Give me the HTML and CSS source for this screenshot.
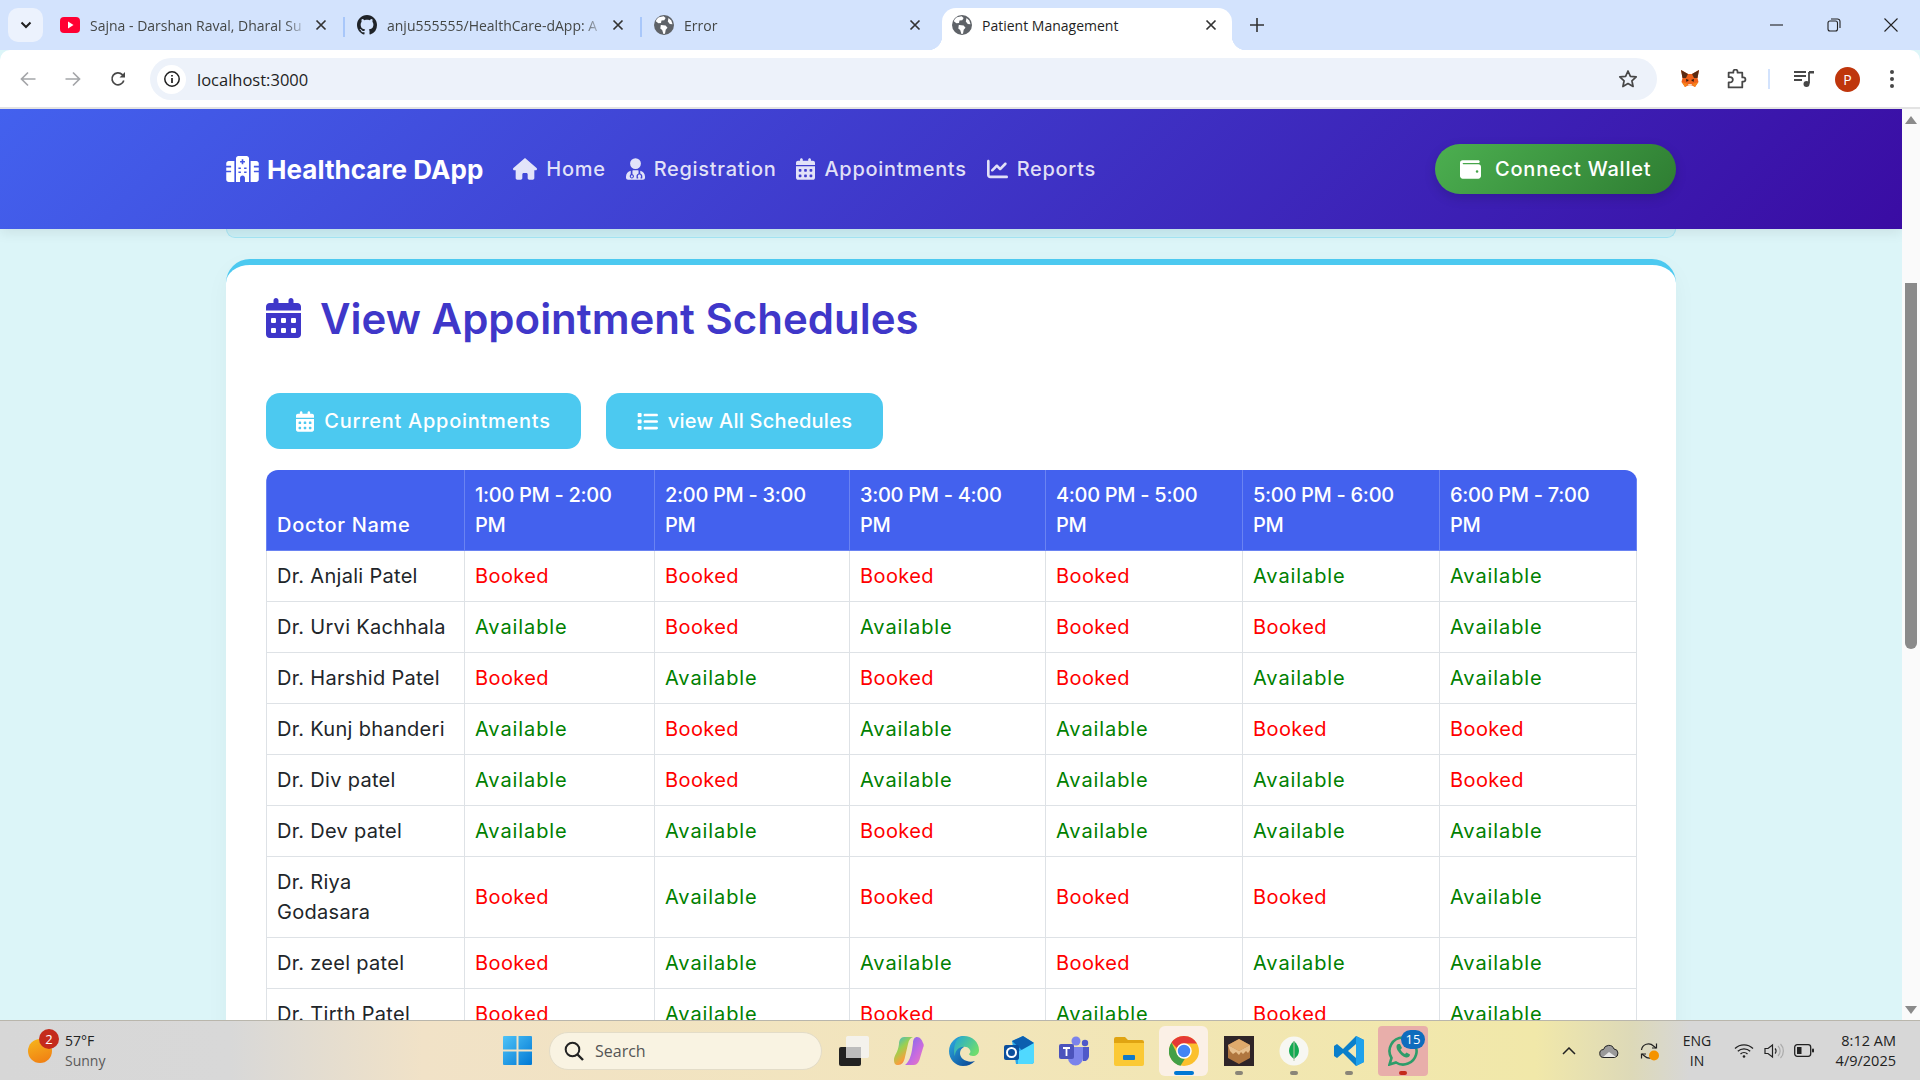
FILE: index.html
```html
<!DOCTYPE html>
<html>
<head>
    <meta charset="utf-8">
    <title>Patient Management</title>
    <link rel="stylesheet" href="styles.css">
</head>
<body>

<svg class="defs" width="0" height="0">
    <symbol id="i-calendar" viewBox="0 0 448 512"><path d="M128 0c17.7 0 32 14.3 32 32V64H288V32c0-17.7 14.3-32 32-32s32 14.3 32 32V64h48c26.5 0 48 21.5 48 48v48H0V112C0 85.5 21.5 64 48 64H96V32c0-17.7 14.3-32 32-32zM0 192H448V464c0 26.5-21.5 48-48 48H48c-26.5 0-48-21.5-48-48V192zm64 80v32c0 8.8 7.2 16 16 16h32c8.8 0 16-7.2 16-16V272c0-8.8-7.2-16-16-16H80c-8.8 0-16 7.2-16 16zm128 0v32c0 8.8 7.2 16 16 16h32c8.8 0 16-7.2 16-16V272c0-8.8-7.2-16-16-16H208c-8.8 0-16 7.2-16 16zm144-16c-8.8 0-16 7.2-16 16v32c0 8.8 7.2 16 16 16h32c8.8 0 16-7.2 16-16V272c0-8.8-7.2-16-16-16H336zM64 400v32c0 8.8 7.2 16 16 16h32c8.8 0 16-7.2 16-16V400c0-8.8-7.2-16-16-16H80c-8.8 0-16 7.2-16 16zm144-16c-8.8 0-16 7.2-16 16v32c0 8.8 7.2 16 16 16h32c8.8 0 16-7.2 16-16V400c0-8.8-7.2-16-16-16H208zm112 16v32c0 8.8 7.2 16 16 16h32c8.8 0 16-7.2 16-16V400c0-8.8-7.2-16-16-16H336c-8.8 0-16 7.2-16 16z"/></symbol>
    <symbol id="i-house" viewBox="0 0 576 512"><path d="M575.8 255.5c0 18-15 32.1-32 32.1h-32l.7 160.2c0 2.7-.2 5.4-.5 8.1V472c0 22.1-17.9 40-40 40H456c-1.1 0-2.2 0-3.3-.1c-1.4 .1-2.8 .1-4.2 .1H416 392c-22.1 0-40-17.9-40-40V448 384c0-17.7-14.3-32-32-32H256c-17.7 0-32 14.3-32 32v64 24c0 22.1-17.9 40-40 40H160 128.1c-1.5 0-3-.1-4.5-.2c-1.2 .1-2.4 .2-3.6 .2H104c-22.1 0-40-17.9-40-40V360c0-.9 0-1.9 .1-2.8V287.6H32c-18 0-32-14-32-32.1c0-9 3-17 10-24L266.4 8c7-7 15-8 22-8s15 2 21 7L564.8 231.5c8 7 12 15 11 24z"/></symbol>
    <symbol id="i-chart" viewBox="0 0 512 512"><path d="M64 64c0-17.7-14.3-32-32-32S0 46.3 0 64V400c0 44.2 35.8 80 80 80H480c17.7 0 32-14.3 32-32s-14.3-32-32-32H80c-8.8 0-16-7.2-16-16V64zm406.6 86.6c12.5-12.5 12.5-32.8 0-45.3s-32.8-12.5-45.3 0L320 210.7l-57.4-57.4c-12.5-12.5-32.8-12.5-45.3 0l-112 112c-12.5 12.5-12.5 32.8 0 45.3s32.8 12.5 45.3 0L240 221.3l57.4 57.4c12.5 12.5 32.8 12.5 45.3 0l128-128z"/></symbol>
    <symbol id="i-list" viewBox="0 0 512 512"><path d="M40 48C26.7 48 16 58.7 16 72v48c0 13.3 10.7 24 24 24H88c13.3 0 24-10.7 24-24V72c0-13.3-10.7-24-24-24H40zM192 64c-17.7 0-32 14.3-32 32s14.3 32 32 32H480c17.7 0 32-14.3 32-32s-14.3-32-32-32H192zm0 160c-17.7 0-32 14.3-32 32s14.3 32 32 32H480c17.7 0 32-14.3 32-32s-14.3-32-32-32H192zm0 160c-17.7 0-32 14.3-32 32s14.3 32 32 32H480c17.7 0 32-14.3 32-32s-14.3-32-32-32H192zM16 232v48c0 13.3 10.7 24 24 24H88c13.3 0 24-10.7 24-24V232c0-13.3-10.7-24-24-24H40c-13.3 0-24 10.7-24 24zM40 368c-13.3 0-24 10.7-24 24v48c0 13.3 10.7 24 24 24H88c13.3 0 24-10.7 24-24V392c0-13.3-10.7-24-24-24H40z"/></symbol>
    <symbol id="i-wallet" viewBox="0 0 512 512"><path d="M64 32C28.7 32 0 60.7 0 96V416c0 35.3 28.7 64 64 64H448c35.3 0 64-28.7 64-64V192c0-35.3-28.7-64-64-64H80c-8.8 0-16-7.2-16-16s7.2-16 16-16H448c17.7 0 32-14.3 32-32s-14.3-32-32-32H64zM416 272a32 32 0 1 1 0 64 32 32 0 1 1 0-64z"/></symbol>
    <symbol id="i-hospital" viewBox="0 0 640 512"><path fill-rule="evenodd" d="M192 48c0-26.5 21.5-48 48-48H400c26.5 0 48 21.5 48 48V512H368V432c0-26.5-21.5-48-48-48s-48 21.5-48 48v80H192V48zM304 64v32H272v32h32v32h32V128h32V96H336V64H304zM240 224v32h48V224H240zm112 0v32h48V224H352zM240 304v32h48V304H240zm112 0v32h48V304H352zM160 96V512H48c-26.5 0-48-21.5-48-48V320h96V288H0V224h96V192H0V144c0-26.5 21.5-48 48-48H160zM480 96H592c26.5 0 48 21.5 48 48v48H544v32h96v64H544v32h96V464c0 26.5-21.5 48-48 48H480V96z"/></symbol>
    <symbol id="i-doctor" viewBox="0 0 448 512"><path fill-rule="evenodd" d="M224 0a128 128 0 1 1 0 256A128 128 0 1 1 224 0zM112 296c-64 14-112 70-112 138v30c0 26 22 48 48 48H400c26 0 48-22 48-48V434c0-68-48-124-112-138v64c30 8 48 34 48 62v44c0 9-7 16-16 16H344v-32h8V422c0-20-16-36-36-36s-36 16-36 36v28h8v32H264c-9 0-16-7-16-16V422c0-28 18-54 48-62V292c-12-2-24-4-36-4H188c-12 0-24 2-36 4v86c22 7 36 28 36 50 0 30-24 50-50 50s-50-20-50-50c0-22 14-43 24-50V296zM138 454a24 24 0 1 0 0-48 24 24 0 1 0 0 48z"/></symbol>
    <symbol id="i-globe" viewBox="0 0 20 20"><circle cx="10" cy="10" r="10" fill="#5f6368"/><path fill="#fff" d="M5 2.2 9.6 1.2l2 1.8-1.3 2.2-2.8.4-.5 2.4-2.600.2-2.600-2C2.400 4.600 3.500 3.100 5 2.200zM7.300 9.900l4.300.7 1.900 2.100-1.800 2.100-.7 3.900-1.600.2-1.200-3.800-1.900-1.700.5-3.500zM14.500 3l2.800 2.600 1.200 3.600-2.700-.2-2-2.500.7-3.500z"/></symbol>
    <symbol id="i-x" viewBox="0 0 12 12"><path d="M1.500 1.500l9 9M10.500 1.500l-9 9" stroke="currentColor" stroke-width="1.700" fill="none"/></symbol>
</svg>

<div class="tabstrip">
    <div class="tab-list-btn">
        <svg width="12" height="8" viewBox="0 0 12 8"><path d="M1.500 1.500L6 6l4.500-4.500" fill="none" stroke="#1f1f1f" stroke-width="2"/></svg>
    </div>
    <div class="tab">
        <svg class="favicon" viewBox="0 0 20 20"><rect x="0" y="2" width="20" height="16" rx="4" fill="#ff0033"/><path d="M8 6.500l5.500 3.500L8 13.500z" fill="#fff"/></svg>
        <span class="tab-title">Sajna - Darshan Raval, Dharal Su</span>
        <svg class="tab-close"><use href="#i-x"/></svg>
    </div>
    <div class="tab-sep"></div>
    <div class="tab">
        <svg class="favicon" viewBox="0 0 16 16" fill="#1f2328"><path d="M8 0C3.580 0 0 3.580 0 8c0 3.540 2.290 6.530 5.470 7.590.4.070.55-.17.55-.38 0-.19-.01-.82-.01-1.490-2.010.37-2.530-.49-2.690-.94-.09-.23-.48-.94-.82-1.130-.28-.15-.68-.52-.01-.53.63-.01 1.080.58 1.230.82.72 1.210 1.870.87 2.330.66.07-.52.28-.87.51-1.070-1.780-.2-3.640-.89-3.640-3.950 0-.87.31-1.590.82-2.150-.08-.2-.36-1.020.08-2.120 0 0 .67-.21 2.200.82.64-.18 1.320-.27 2-.27.68 0 1.360.09 2 .27 1.530-1.040 2.200-.82 2.200-.82.44 1.100.16 1.920.08 2.120.51.56.82 1.270.82 2.150 0 3.070-1.870 3.750-3.650 3.950.29.25.54.73.54 1.480 0 1.070-.01 1.930-.01 2.200 0 .21.15.46.55.38A8.013 8.013 0 0016 8c0-4.420-3.580-8-8-8z"/></svg>
        <span class="tab-title">anju555555/HealthCare-dApp: A</span>
        <svg class="tab-close"><use href="#i-x"/></svg>
    </div>
    <div class="tab-sep"></div>
    <div class="tab">
        <svg class="favicon"><use href="#i-globe"/></svg>
        <span class="tab-title">Error</span>
        <svg class="tab-close"><use href="#i-x"/></svg>
    </div>
    <div class="tab tab-active">
        <svg class="favicon"><use href="#i-globe"/></svg>
        <span class="tab-title">Patient Management</span>
        <svg class="tab-close"><use href="#i-x"/></svg>
    </div>
    <svg class="new-tab" viewBox="0 0 14 14"><path d="M7 0v14M0 7h14" stroke="#333" stroke-width="1.600" fill="none"/></svg>
    <div class="win-controls">
        <svg viewBox="0 0 14 14"><path d="M0 7h13" stroke="#222" stroke-width="1.100"/></svg>
        <svg viewBox="0 0 14 14"><rect x="1" y="3" width="9.500" height="10" rx="2" fill="none" stroke="#222" stroke-width="1.100"/><path d="M4 1h6.500A2.500 2.500 0 0 1 13 3.500V10" fill="none" stroke="#222" stroke-width="1.100"/></svg>
        <svg viewBox="0 0 14 14"><path d="M.5.500l13 13M13.500.500l-13 13" stroke="#222" stroke-width="1.100"/></svg>
    </div>
</div>

<div class="toolbar">
    <svg class="tool-icon" viewBox="0 0 16 16"><path d="M15.500 8H1.500M8 1.500L1.500 8 8 14.500" fill="none" stroke="#a4a6a9" stroke-width="1.700"/></svg>
    <svg class="tool-icon" viewBox="0 0 16 16"><path d="M.5 8h14M8 1.500L14.500 8 8 14.500" fill="none" stroke="#a4a6a9" stroke-width="1.700"/></svg>
    <svg class="tool-icon" viewBox="0 0 16 16"><path d="M13.800 9.500A6 6 0 1 1 12.300 3.600L14.300 5.500" fill="none" stroke="#474747" stroke-width="1.700"/><path d="M15 1v5.500H9.500z" fill="#474747"/></svg>
    <div class="omnibox">
        <span class="site-info">
            <svg viewBox="0 0 16 16" width="16" height="16"><circle cx="8" cy="8" r="7.200" fill="none" stroke="#1f1f1f" stroke-width="1.500"/><path d="M8 7v5M8 4v1.600" stroke="#1f1f1f" stroke-width="1.700"/></svg>
        </span>
        <span class="url">localhost:3000</span>
        <svg class="star" viewBox="0 0 20 20"><path d="M10 2l2.400 5.300 5.800.6-4.300 3.900 1.200 5.700L10 14.600l-5.100 2.900 1.200-5.700L1.800 7.900l5.800-.6z" fill="none" stroke="#474747" stroke-width="1.700" stroke-linejoin="round"/></svg>
    </div>
    <div class="ext-icons">
        <svg class="ext-fox" viewBox="0 0 20 20"><path d="M1 1l7 4h4l7-4-1.500 8 1 4-3.500 5-3-1.500H8L5 18l-3.500-5 1-4z" fill="#f0601a"/><path d="M1 1l7 4-2 4H2.500zM19 1l-7 4 2 4h3.500z" fill="#5b2a12"/><path d="M6 10l3 1-2.500 2zM14 10l-3 1 2.500 2z" fill="#2f1c0f"/><path d="M8 15h4l-.8 2H8.800z" fill="#f5d7be"/><path d="M2 13l6 2-3 3zM18 13l-6 2 3 3z" fill="#f6851b"/></svg>
        <svg class="ext-puzzle" viewBox="0 0 20 20"><path d="M2.500 3.500H7V2.600a2 2 0 0 1 4 0v.900h4.500V8h1a2 2 0 0 1 0 4h-1v5.500H2.500v-4.700H4a2.500 2.500 0 0 0 0-5H2.500z" fill="none" stroke="#474747" stroke-width="1.700" stroke-linejoin="round"/></svg>
        <div class="tool-sep"></div>
        <svg class="ext-media" viewBox="0 0 20 20"><path d="M0 3h12M0 7h12M0 11h8" stroke="#474747" stroke-width="1.800"/><path d="M15 3v11.500" stroke="#474747" stroke-width="1.800"/><path d="M15 2h5v2.500h-5z" fill="#474747"/><circle cx="12.500" cy="15" r="3" fill="#474747"/></svg>
        <span class="avatar">P</span>
        <svg class="ext-dots" viewBox="0 0 4 20"><circle cx="2" cy="3" r="2" fill="#474747"/><circle cx="2" cy="10" r="2" fill="#474747"/><circle cx="2" cy="17" r="2" fill="#474747"/></svg>
    </div>
</div>

<div class="viewport">
    <div class="page">
        <header class="site-header">
            <div class="header-inner">
                <div class="nav-left">
                    <a class="brand"><svg class="brand-icon"><use href="#i-hospital"/></svg>Healthcare DApp</a>
                    <nav class="main-nav">
                        <a class="nav-link"><svg class="nav-ic-house"><use href="#i-house"/></svg>Home</a>
                        <a class="nav-link"><svg class="nav-ic"><use href="#i-doctor"/></svg>Registration</a>
                        <a class="nav-link"><svg class="nav-ic"><use href="#i-calendar"/></svg>Appointments</a>
                        <a class="nav-link"><svg class="nav-ic-chart"><use href="#i-chart"/></svg>Reports</a>
                    </nav>
                </div>
                <button class="wallet-btn"><svg class="wallet-ic"><use href="#i-wallet"/></svg>Connect Wallet</button>
            </div>
        </header>

        <main class="content">
            <div class="prev-card"></div>
            <section class="card">
                <h2 class="card-title"><svg class="title-ic"><use href="#i-calendar"/></svg>View Appointment Schedules</h2>
                <div class="btn-row">
                    <button class="tab-btn btn-current"><svg class="btn-ic-cal"><use href="#i-calendar"/></svg>Current Appointments</button>
                    <button class="tab-btn btn-all"><svg class="btn-ic-list"><use href="#i-list"/></svg>view All Schedules</button>
                </div>
                <div class="table-wrap">
                    <table class="schedule">
                        <thead>
                            <tr>
                                <th>Doctor Name</th>
                                <th>1:00 PM - 2:00<br>PM</th>
                                <th>2:00 PM - 3:00<br>PM</th>
                                <th>3:00 PM - 4:00<br>PM</th>
                                <th>4:00 PM - 5:00<br>PM</th>
                                <th>5:00 PM - 6:00<br>PM</th>
                                <th>6:00 PM - 7:00<br>PM</th>
                            </tr>
                        </thead>
                        <tbody>
                            <tr><td>Dr. Anjali Patel</td><td class="booked">Booked</td><td class="booked">Booked</td><td class="booked">Booked</td><td class="booked">Booked</td><td class="free">Available</td><td class="free">Available</td></tr>
                            <tr><td>Dr. Urvi Kachhala</td><td class="free">Available</td><td class="booked">Booked</td><td class="free">Available</td><td class="booked">Booked</td><td class="booked">Booked</td><td class="free">Available</td></tr>
                            <tr><td>Dr. Harshid Patel</td><td class="booked">Booked</td><td class="free">Available</td><td class="booked">Booked</td><td class="booked">Booked</td><td class="free">Available</td><td class="free">Available</td></tr>
                            <tr><td>Dr. Kunj bhanderi</td><td class="free">Available</td><td class="booked">Booked</td><td class="free">Available</td><td class="free">Available</td><td class="booked">Booked</td><td class="booked">Booked</td></tr>
                            <tr><td>Dr. Div patel</td><td class="free">Available</td><td class="booked">Booked</td><td class="free">Available</td><td class="free">Available</td><td class="free">Available</td><td class="booked">Booked</td></tr>
                            <tr><td>Dr. Dev patel</td><td class="free">Available</td><td class="free">Available</td><td class="booked">Booked</td><td class="free">Available</td><td class="free">Available</td><td class="free">Available</td></tr>
                            <tr><td>Dr. Riya<br>Godasara</td><td class="booked">Booked</td><td class="free">Available</td><td class="booked">Booked</td><td class="booked">Booked</td><td class="booked">Booked</td><td class="free">Available</td></tr>
                            <tr><td>Dr. zeel patel</td><td class="booked">Booked</td><td class="free">Available</td><td class="free">Available</td><td class="booked">Booked</td><td class="free">Available</td><td class="free">Available</td></tr>
                            <tr><td>Dr. Tirth Patel</td><td class="booked">Booked</td><td class="free">Available</td><td class="booked">Booked</td><td class="free">Available</td><td class="booked">Booked</td><td class="free">Available</td></tr>
                        </tbody>
                    </table>
                </div>
            </section>
        </main>
    </div>
    <div class="scrollbar">
        <svg class="sb-arrow" viewBox="0 0 12 8"><path d="M6 0l6 8H0z" fill="#8a8a8a"/></svg>
        <div class="sb-thumb"></div>
        <svg class="sb-arrow sb-down" viewBox="0 0 12 8"><path d="M0 0h12L6 8z" fill="#8a8a8a"/></svg>
    </div>
</div>

<footer class="taskbar">
    <div class="weather">
        <div class="weather-ic"><span class="weather-badge">2</span></div>
        <div class="weather-text">
            <span class="temp">57°F</span>
            <span class="cond">Sunny</span>
        </div>
    </div>
    <div class="task-center">
        <svg class="win-logo" viewBox="0 0 29 29">
            <defs><linearGradient id="winb" x1="0" y1="0" x2="1" y2="1"><stop offset="0" stop-color="#4fc3f7"/><stop offset="1" stop-color="#0078d4"/></linearGradient></defs>
            <path fill="url(#winb)" d="M1 0h12.500v13.500H0V1a1 1 0 0 1 1-1zM15.500 0H28a1 1 0 0 1 1 1v12.500H15.500zM0 15.500h13.500V29H1a1 1 0 0 1-1-1zM15.500 15.500H29V28a1 1 0 0 1-1 1H15.500z"/>
        </svg>
        <div class="searchbox">
            <svg viewBox="0 0 20 20" width="20" height="20"><circle cx="8.500" cy="8.500" r="6.800" fill="none" stroke="#222" stroke-width="2"/><path d="M13.500 13.500L19 19" stroke="#222" stroke-width="2.400"/></svg>
            <span>Search</span>
        </div>
        <div class="task-apps">
            <div class="app">
                <svg viewBox="0 0 30 30"><rect x="0" y="11" width="22" height="19" rx="2" fill="#222"/><rect x="7" y="0" width="23" height="22" rx="2" fill="#f4f4f4" fill-opacity=".85"/><rect x="7" y="11" width="15" height="11" fill="#bdbdbd"/></svg>
            </div>
            <div class="app">
                <svg viewBox="0 0 30 30">
                    <defs><linearGradient id="cop" x1="0" y1="0" x2=".6" y2="1"><stop offset="0" stop-color="#2fb5e6"/><stop offset=".45" stop-color="#9bd14f"/><stop offset=".8" stop-color="#f7a13c"/><stop offset="1" stop-color="#f0684c"/></linearGradient><linearGradient id="cop2" x1="0" y1="0" x2="1" y2="1"><stop offset="0" stop-color="#6c6cf0"/><stop offset=".6" stop-color="#c86be0"/><stop offset="1" stop-color="#f07cb4"/></linearGradient></defs>
                    <path fill="url(#cop)" d="M10 1h9c-3 1-4 3-5 7l-3 13c-1 5-3 8-7 8-3 0-4-2-4-5 0-5 4-7 5-16 0-4 2-7 5-7z"/>
                    <path fill="url(#cop2)" d="M11 29h9c3 0 5-3 6-7l3-10c1-2 1-4 0-5-1-3-3-6-6-6-2 0-4 2-4 6l-1 7c-1 6-3 12-7 15z"/>
                </svg>
            </div>
            <div class="app">
                <svg viewBox="0 0 30 30">
                    <defs><linearGradient id="edg" x1="0" y1=".3" x2=".7" y2="1"><stop offset="0" stop-color="#2a9fd8"/><stop offset="1" stop-color="#0c4f9c"/></linearGradient><linearGradient id="edg2" x1="0" y1="0" x2="1" y2=".6"><stop offset="0" stop-color="#1fa6d8"/><stop offset="1" stop-color="#6fdc6f"/></linearGradient></defs>
                    <path fill="url(#edg)" d="M15 0A15 15 0 0 0 0 15c0 8 6 15 14 15 5 0 9-2 12-5-3 1-6 1-8 0-4-1-7-4-7-8 0-3 2-5 4-6l-2-4z"/>
                    <path fill="url(#edg2)" d="M15 0c8 0 15 6 15 14 0 4-3 6-6 6-2 0-4-1-4-2 1-1 2-2 1-4-1-3-5-4-8-3-5 1-7 5-7 9-2-5-1-20 9-20z"/>
                </svg>
            </div>
            <div class="app">
                <svg viewBox="0 0 30 30"><path d="M8 5l11-5 11 7v18a3 3 0 0 1-3 3H12z" fill="#28a8ea"/><path d="M8 5l11-5 11 7-11 8z" fill="#0c5fb0"/><path d="M14 16l16-9v18a3 3 0 0 1-3 3H14z" fill="#50d9ff"/><rect x="0" y="9" width="15" height="15" rx="2" fill="#0a4f9e"/><circle cx="7.500" cy="16.500" r="4.500" fill="none" stroke="#fff" stroke-width="2"/></svg>
            </div>
            <div class="app">
                <svg viewBox="0 0 30 30"><circle cx="17" cy="5" r="4.500" fill="#7b83eb"/><circle cx="26" cy="7" r="3.200" fill="#5059c9"/><path d="M21 11h9v9a5 5 0 0 1-6 5z" fill="#5059c9"/><path d="M9 11h15v11a7.500 7.500 0 0 1-15 0z" fill="#7b83eb"/><rect x="0" y="8" width="15" height="15" rx="2" fill="#4b53bc"/><path d="M4 12h7M7.500 12v8" stroke="#fff" stroke-width="1.800"/></svg>
            </div>
            <div class="app">
                <svg viewBox="0 0 30 30"><path d="M0 3a2 2 0 0 1 2-2h9l3 3h14a2 2 0 0 1 2 2v3H0z" fill="#e0a412"/><path d="M0 7h30v21a2 2 0 0 1-2 2H2a2 2 0 0 1-2-2z" fill="#fbc935"/><rect x="9" y="19" width="12" height="5" rx="1" fill="#0f79c9"/></svg>
            </div>
            <div class="app app-chrome">
                <svg viewBox="0 0 30 30"><circle cx="15" cy="15" r="15" fill="#fbc02d"/><path d="M15 0a15 15 0 0 1 13 7.500H15a7.500 7.500 0 0 0-7 4.800L2.500 6.500A15 15 0 0 1 15 0z" fill="#e53935"/><path d="M2.500 6.500L8.500 18.500a7.500 7.500 0 0 0 7.500 4L11.500 29.700A15 15 0 0 1 2.500 6.500z" fill="#43a047"/><circle cx="15" cy="15" r="7" fill="#4285f4" stroke="#fff" stroke-width="1.500"/></svg>
                <span class="run-dot run-active"></span>
            </div>
            <div class="app">
                <svg viewBox="0 0 30 30"><rect width="30" height="30" fill="#2f2528"/><path d="M15 3l11 6v13l-11 6-11-6V9z" fill="#b0763f"/><path d="M15 3l11 6-11 6-11-6z" fill="#e0aa6c"/><path d="M4 9l11 6 11-6v5l-2 3-2-2-3 3-2-2-2 3-3-3-3 2-3-3z" fill="#e8c08e"/></svg>
                <span class="run-dot"></span>
            </div>
            <div class="app">
                <svg viewBox="0 0 30 30"><circle cx="15" cy="15" r="14.500" fill="#f7f7f2"/><path d="M15 5c3 3 5 6 5 10 0 3-2 6-5 8-3-2-5-5-5-8 0-4 2-7 5-10z" fill="#13aa52"/><path d="M15 5v20" stroke="#b8c4a8" stroke-width="1"/></svg>
                <span class="run-dot"></span>
            </div>
            <div class="app">
                <svg viewBox="0 0 30 30"><path d="M22 0l8 4v22l-8 4L9 17l-6 5-3-2v-10l3-2 6 5z" fill="#0a7fcb"/><path d="M22 0l8 4v22l-8 4z" fill="#1ea1ec"/><path d="M22 8l-8 7 8 7z" fill="#f1e8b6"/></svg>
                <span class="run-dot"></span>
            </div>
            <div class="app app-whatsapp">
                <svg viewBox="0 0 30 30"><path d="M15 1.500a13.500 13.500 0 0 0-11.500 20.500L1.500 28.500 8 26.500A13.500 13.500 0 1 0 15 1.500z" fill="none" stroke="#2e9c6a" stroke-width="2.600"/><path d="M10 8c-2 1-2 4 0 7 2 3 5 6 8 6.500 2 .3 4-1 4-3l-3.500-2-1.500 1.500c-2-1-3.500-2.500-4.500-4.500L14 12l-2-4z" fill="#2e9c6a"/></svg>
                <span class="wa-badge">15</span>
                <span class="run-dot run-alert"></span>
            </div>
        </div>
    </div>
    <div class="tray">
        <svg class="tray-chev" viewBox="0 0 14 8"><path d="M1 7l6-6 6 6" fill="none" stroke="#222" stroke-width="1.500"/></svg>
        <svg class="tray-cloud" viewBox="0 0 20 14"><path d="M5 13.500a4 4 0 0 1-.5-8A5.500 5.500 0 0 1 15 5a4.300 4.300 0 0 1 .5 8.500z" fill="#9a9a9a" stroke="#222" stroke-width="1"/><path d="M4 13l6-5 7 5z" fill="#e8e8e8"/></svg>
        <svg class="tray-sync" viewBox="0 0 20 20"><path d="M2.500 9a7 7 0 0 1 12-4l2.500 2M17.500 11a7 7 0 0 1-12 4L3 13" fill="none" stroke="#222" stroke-width="1.200"/><path d="M17.500 2.500V7H13M2.500 17.500V13H7" fill="none" stroke="#222" stroke-width="1.200"/><circle cx="15" cy="14.500" r="5" fill="#f59300"/></svg>
        <div class="lang"><span>ENG</span><span>IN</span></div>
        <svg class="tray-wifi" viewBox="0 0 20 15"><path d="M1 5.500a13 13 0 0 1 18 0M3.800 8.300a9 9 0 0 1 12.400 0M6.500 11a5 5 0 0 1 7 0" fill="none" stroke="#222" stroke-width="1.300"/><circle cx="10" cy="13.500" r="1.300" fill="#222"/></svg>
        <svg class="tray-vol" viewBox="0 0 20 16"><path d="M1 5.500h3L8.500 2v12L4 10.500H1z" fill="none" stroke="#222" stroke-width="1.200"/><path d="M11 5.500a3.500 3.500 0 0 1 0 5" fill="none" stroke="#222" stroke-width="1.200"/><path d="M14 3a7 7 0 0 1 0 10M16.500 1a10 10 0 0 1 0 14" fill="none" stroke="#aaa" stroke-width="1.200"/></svg>
        <svg class="tray-batt" viewBox="0 0 20 13"><rect x=".7" y=".7" width="16" height="11.600" rx="2.500" fill="none" stroke="#222" stroke-width="1.300"/><rect x="3" y="3" width="4.500" height="7" fill="#222"/><rect x="18" y="4.500" width="2" height="4" rx="1" fill="#222"/></svg>
        <div class="clock"><span>8:12 AM</span><span>4/9/2025</span></div>
    </div>
</footer>

</body>
</html>
```

FILE: styles.css
```css
* {
    box-sizing: border-box;
}

html, body {
    height: 100%;
    margin: 0;
    overflow: hidden;
}

body {
    display: flex;
    flex-direction: column;
    font-family: "Inter", "Liberation Sans", sans-serif;
    color: #212529;
    background: #dcf5f8;
}

.defs {
    position: absolute;
}

/* browser tabs */
.tabstrip {
    display: flex;
    align-items: flex-end;
    height: 50px;
    padding-left: 8px;
    background: #d3e3fd;
    font-family: "Open Sans", "Noto Sans", sans-serif;
    font-size: 14px;
    color: #444746;
}

.tab-list-btn {
    display: flex;
    align-items: center;
    justify-content: center;
    width: 35px;
    height: 34px;
    margin-bottom: 8px;
    margin-right: 5px;
    border-radius: 10px;
    background: #ecf2fd;
}

.tab {
    display: flex;
    align-items: center;
    width: 295px;
    height: 42px;
    padding: 0 16px 8px 12px;
    flex-shrink: 0;
}

.tab-sep {
    width: 2px;
    height: 20px;
    margin-bottom: 13px;
    background: #a8c7fa;
    flex-shrink: 0;
}

.favicon {
    width: 20px;
    height: 20px;
    margin-right: 10px;
    flex-shrink: 0;
}

.tab-title {
    flex: 1;
    white-space: nowrap;
    overflow: hidden;
    -webkit-mask-image: linear-gradient(90deg, #000 90%, transparent 100%);
    mask-image: linear-gradient(90deg, #000 90%, transparent 100%);
}

.tab-close {
    width: 12px;
    height: 12px;
    margin-left: 8px;
    color: #333;
    flex-shrink: 0;
}

.tab-active {
    position: relative;
    width: 290px;
    margin-left: 5px;
    padding: 0 15px 8px 10px;
    background: #fff;
    border-radius: 14px 14px 0 0;
    color: #1f1f1f;
}

.tab-active .tab-title {
    -webkit-mask-image: none;
    mask-image: none;
}

.tab-active::before,
.tab-active::after {
    content: "";
    position: absolute;
    bottom: 0;
    width: 14px;
    height: 14px;
}

.tab-active::before {
    left: -14px;
    background: radial-gradient(circle at 0 0, transparent 14px, #fff 14.5px);
}

.tab-active::after {
    right: -14px;
    background: radial-gradient(circle at 100% 0, transparent 14px, #fff 14.5px);
}

.new-tab {
    width: 14px;
    height: 14px;
    margin-left: 18px;
    margin-bottom: 18px;
}

.win-controls {
    display: flex;
    gap: 43px;
    margin-left: auto;
    margin-right: 22px;
    margin-bottom: 18px;
}

.win-controls svg {
    width: 14px;
    height: 14px;
}

/* address bar */
.toolbar {
    display: flex;
    align-items: center;
    height: 59px;
    padding: 1px 0 0 20px;
    background: #fff;
    border-radius: 10px 10px 0 0;
    border-bottom: 2px solid #e3e3e3;
}

.tool-icon {
    width: 16px;
    height: 16px;
    margin-right: 29px;
    flex-shrink: 0;
}

.tool-icon:nth-of-type(3) {
    margin-right: 24px;
}

.omnibox {
    display: flex;
    align-items: center;
    width: 1507px;
    height: 42px;
    padding: 0 19px 0 7px;
    border-radius: 21px;
    background: #edf2fa;
    font-family: "Open Sans", "Noto Sans", sans-serif;
    font-size: 16.5px;
    color: #1f1f1f;
}

.site-info {
    display: flex;
    align-items: center;
    justify-content: center;
    width: 29px;
    height: 29px;
    margin-right: 11px;
    border-radius: 50%;
    background: #fff;
}

.star {
    width: 20px;
    height: 20px;
    margin-left: auto;
}

.ext-icons {
    display: flex;
    align-items: center;
    flex: 1;
    padding-left: 23px;
}

.ext-fox {
    width: 20px;
    height: 20px;
    margin-right: 26px;
}

.ext-puzzle {
    width: 21px;
    height: 21px;
    margin-right: 21px;
}

.tool-sep {
    width: 2px;
    height: 20px;
    margin-right: 24px;
    background: #d3e3fd;
}

.ext-media {
    width: 20px;
    height: 20px;
    margin-right: 21px;
}

.avatar {
    display: flex;
    align-items: center;
    justify-content: center;
    width: 25px;
    height: 25px;
    margin-right: 30px;
    border-radius: 50%;
    background: #bf360c;
    color: #fff;
    font-family: "Open Sans", sans-serif;
    font-size: 14px;
}

.ext-dots {
    width: 4px;
    height: 20px;
}

/* page area */
.viewport {
    display: flex;
    flex: 1;
    min-height: 0;
}

.page {
    flex: 1;
    min-width: 0;
    overflow: hidden;
    background: #dcf5f8;
}

.site-header {
    position: relative;
    height: 120px;
    background: linear-gradient(135deg, #4361ee, #3a0ca3);
    box-shadow: 0 4px 12px rgba(0, 0, 0, .08);
}

.header-inner {
    display: flex;
    align-items: center;
    justify-content: space-between;
    width: 1450px;
    height: 100%;
    margin: 0 auto;
}

.nav-left {
    display: flex;
    align-items: center;
}

.brand {
    display: flex;
    align-items: center;
    font-size: 26px;
    font-weight: 700;
    color: #fff;
    letter-spacing: .05px;
}

.brand-icon {
    width: 33px;
    height: 26px;
    margin-right: 8px;
    fill: #fff;
}

.main-nav {
    display: flex;
    align-items: center;
    margin-left: 30px;
}

.nav-link {
    display: flex;
    align-items: center;
    margin-right: 20px;
    font-size: 20px;
    font-weight: 500;
    letter-spacing: .7px;
    color: rgba(255, 255, 255, .85);
}

.nav-link svg {
    fill: rgba(255, 255, 255, .85);
    margin-right: 9px;
}

.nav-ic {
    width: 19px;
    height: 22px;
}

.nav-ic-house {
    width: 24px;
    height: 22px;
}

.nav-ic-chart {
    width: 21px;
    height: 22px;
}

.wallet-btn {
    display: flex;
    align-items: center;
    width: 241px;
    height: 50px;
    padding: 0 0 0 25px;
    border: none;
    border-radius: 25px;
    background: linear-gradient(135deg, #4caf50, #2e7d32);
    box-shadow: 0 4px 12px rgba(0, 0, 0, .15);
    color: #fff;
    font-family: inherit;
    font-size: 20px;
    font-weight: 500;
    letter-spacing: .8px;
}

.wallet-ic {
    width: 21px;
    height: 21px;
    margin-right: 14px;
    fill: #fff;
}

.content {
    width: 1450px;
    margin: 0 auto;
}

.prev-card {
    height: 9px;
    margin-bottom: 21px;
    background: #cdf0f6;
    border: 1px solid #a5e6f5;
    border-top: none;
    border-radius: 0 0 10px 10px;
}

.card {
    padding: 24px 40px;
    background: #fff;
    border-top: 6px solid #4cc9f0;
    border-radius: 24px 24px 0 0;
    box-shadow: 0 8px 24px rgba(0, 0, 0, .04);
}

.card-title {
    display: flex;
    align-items: center;
    height: 58px;
    margin: 0 0 46px;
    font-size: 42px;
    font-weight: 600;
    color: #3f37c9;
}

.title-ic {
    width: 35px;
    height: 40px;
    margin-right: 19px;
    fill: #3f37c9;
}

.btn-row {
    display: flex;
    gap: 25px;
    margin-bottom: 21px;
}

.tab-btn {
    display: flex;
    align-items: center;
    justify-content: center;
    height: 56px;
    border: none;
    border-radius: 14px;
    background: #4cc9f0;
    color: #fff;
    font-family: inherit;
    font-size: 20px;
    font-weight: 500;
}

.tab-btn svg {
    fill: #fff;
    margin-right: 10px;
}

.btn-current {
    width: 315px;
    letter-spacing: .73px;
}

.btn-all {
    width: 277px;
    letter-spacing: .27px;
}

.btn-ic-cal {
    width: 18px;
    height: 21px;
}

.btn-ic-list {
    width: 21px;
    height: 21px;
}

.table-wrap {
    margin-right: -1px;
    border-radius: 12px 12px 0 0;
    overflow: hidden;
}

.schedule {
    width: 1370px;
    table-layout: fixed;
    border-collapse: collapse;
    font-size: 20px;
    line-height: 30px;
}

.schedule th {
    padding: 10px;
    vertical-align: bottom;
    text-align: left;
    font-weight: 500;
    letter-spacing: -.3px;
    background: #4361ee;
    color: #fff;
    border: 1px solid #6a83f2;
    border-top: none;
}

.schedule td {
    padding: 10px;
    vertical-align: middle;
    letter-spacing: .3px;
    border: 1px solid #dee2e6;
}

.schedule th:nth-child(1) { width: 198px; letter-spacing: .7px; }
.schedule th:nth-child(2) { width: 190px; }
.schedule th:nth-child(3) { width: 195px; }
.schedule th:nth-child(4) { width: 196px; }
.schedule th:nth-child(5) { width: 197px; }
.schedule th:nth-child(6) { width: 197px; }
.schedule th:nth-child(7) { width: 197px; }

.schedule td.booked {
    color: #f00;
    letter-spacing: .4px;
}

.schedule td.free {
    color: #008000;
    letter-spacing: .9px;
}

.scrollbar {
    display: flex;
    flex-direction: column;
    align-items: center;
    width: 18px;
    background: #fafafa;
}

.sb-arrow {
    width: 12px;
    height: 8px;
    margin-top: 7px;
    flex-shrink: 0;
}

.sb-thumb {
    width: 12px;
    height: 366px;
    margin-top: 159px;
    border-radius: 0 0 6px 6px;
    background: #8a8a8a;
}

.sb-down {
    margin-top: auto;
    margin-bottom: 6px;
}

/* windows taskbar */
.taskbar {
    display: flex;
    align-items: center;
    height: 60px;
    border-top: 1px solid #b9b6ac;
    background: linear-gradient(90deg, #d7d7d7 0, #d8d8d8 12%, #f1e2c7 22%, #f2e5bb 50%, #f1e8a9 80%, #ddd9b8 85%, #d7d7d7 88%, #d7d7d7 100%);
    font-family: "Open Sans", "Noto Sans", sans-serif;
    color: #222;
}

.weather {
    display: flex;
    align-items: center;
    width: 503px;
    padding-left: 28px;
    flex-shrink: 0;
}

.weather-ic {
    position: relative;
    width: 24px;
    height: 24px;
    margin-right: 13px;
    border-radius: 50%;
    background: linear-gradient(160deg, #f6b71d, #f07a12);
}

.weather-badge {
    position: absolute;
    top: -10px;
    left: 11px;
    width: 20px;
    height: 20px;
    border-radius: 50%;
    background: #c42b1c;
    color: #fff;
    font-size: 13px;
    line-height: 20px;
    text-align: center;
}

.weather-text {
    display: flex;
    flex-direction: column;
    font-size: 14px;
    line-height: 20px;
}

.cond {
    color: #5a5a5a;
}

.task-center {
    display: flex;
    align-items: center;
    flex-shrink: 0;
}

.win-logo {
    width: 29px;
    height: 29px;
    margin-right: 17px;
}

.searchbox {
    display: flex;
    align-items: center;
    width: 273px;
    height: 38px;
    padding-left: 14px;
    border-radius: 19px;
    background: #f9f3e2;
    border: 1px solid #e3dcc8;
    font-size: 16px;
    color: #555;
}

.searchbox span {
    margin-left: 11px;
}

.task-apps {
    display: flex;
    margin-left: 4px;
}

.app {
    position: relative;
    display: flex;
    align-items: center;
    justify-content: center;
    width: 55px;
    height: 50px;
}

.app svg {
    width: 30px;
    height: 30px;
}

.app-chrome {
    width: 49px;
    margin: 0 3px;
    background: #fbf0e6;
    border-radius: 6px;
}

.app-whatsapp {
    width: 50px;
    margin-left: 2px;
    background: #e8aeaa;
    border-radius: 4px;
}

.run-dot {
    position: absolute;
    bottom: 1px;
    left: 50%;
    width: 8px;
    height: 4px;
    margin-left: -4px;
    border-radius: 2px;
    background: #8a8578;
}

.run-active {
    width: 20px;
    margin-left: -10px;
    background: #0078d4;
}

.run-alert {
    background: #c42b1c;
}

.wa-badge {
    position: absolute;
    top: 4px;
    right: 3px;
    width: 24px;
    height: 19px;
    border-radius: 10px;
    background: #0f6cbd;
    color: #fff;
    font-size: 13px;
    line-height: 19px;
    text-align: center;
}

.tray {
    display: flex;
    align-items: center;
    flex: 1;
    padding-left: 134px;
}

.tray-chev {
    width: 14px;
    height: 8px;
    margin-right: 23px;
}

.tray-cloud {
    width: 20px;
    height: 14px;
    margin-right: 20px;
}

.tray-sync {
    width: 20px;
    height: 20px;
    margin-right: 23px;
}

.lang {
    display: flex;
    flex-direction: column;
    align-items: center;
    width: 30px;
    font-size: 14px;
    line-height: 20px;
}

.tray-wifi {
    width: 20px;
    height: 15px;
    margin-left: 22px;
    margin-right: 10px;
}

.tray-vol {
    width: 20px;
    height: 16px;
    margin-right: 10px;
}

.tray-batt {
    width: 20px;
    height: 13px;
}

.clock {
    display: flex;
    flex-direction: column;
    align-items: flex-end;
    margin-left: auto;
    margin-right: 24px;
    font-size: 14.5px;
    line-height: 20px;
}
```
